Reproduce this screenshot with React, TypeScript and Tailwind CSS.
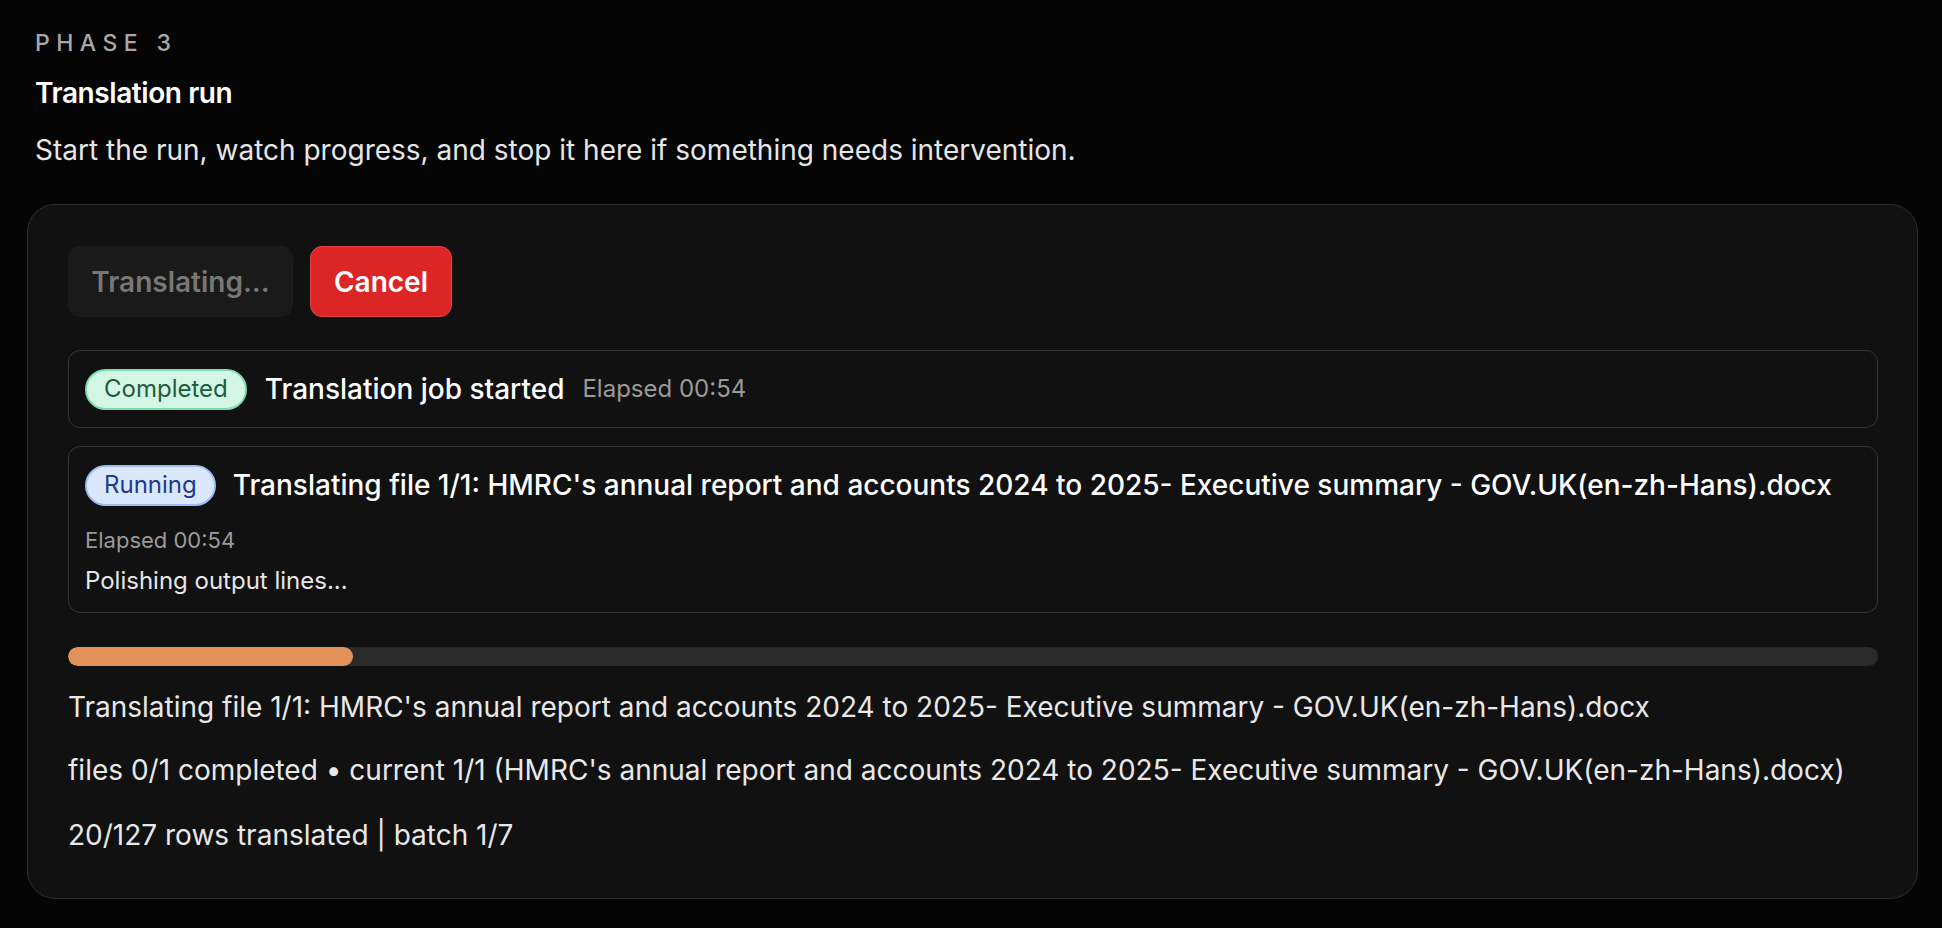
const FILE_NAME =
  "HMRC's annual report and accounts 2024 to 2025- Executive summary - GOV.UK(en-zh-Hans).docx";

const rowsDone = 20;
const rowsTotal = 127;

function Badge({ tone, children }: { tone: "green" | "blue"; children: string }) {
  const styles =
    tone === "green"
      ? "bg-[#d4f7e5] border-[#7fdcae] text-[#1d5c3c]"
      : "bg-[#dbe7fd] border-[#9dbcf2] text-[#1e3a8a]";
  return (
    <span
      className={`inline-flex h-[41px] shrink-0 items-center rounded-full border-2 px-[17px] text-[24px] leading-none ${styles}`}
    >
      {children}
    </span>
  );
}

export default function App() {
  const pct = (rowsDone / rowsTotal) * 100;

  return (
    <div
      className="min-h-screen w-full bg-[#050505] pt-[28px] pb-[30px] text-white"
      style={{ fontFamily: "Inter, 'Noto Sans', sans-serif" }}
    >
      <div className="pl-[35px]">
        <div className="text-[23px] leading-[30px] tracking-[0.28em] text-[#a8a8a8] font-medium">PHASE 3</div>
        <h2 className="mt-[17px] text-[28px] leading-[36px] font-semibold tracking-[-0.015em] text-white">
          Translation run
        </h2>
        <p className="mt-[19px] text-[28px] leading-[40px] text-[#e6e6e6]">
          Start the run, watch progress, and stop it here if something needs intervention.
        </p>
      </div>

      <section className="mt-[34px] ml-[27px] mr-[24px] rounded-[28px] border border-[#2e2e2e] bg-[#111111] pt-[41px] pb-[43px] pl-[40px] pr-[39px]">
        <div className="flex gap-[17px]">
          <button
            disabled
            className="h-[71px] w-[225px] rounded-[12px] bg-[#1a1a1a] text-[28px] font-semibold text-[#777777]"
          >
            Translating...
          </button>
          <button className="h-[71px] w-[142px] rounded-[12px] border border-[#e24545] bg-[#dc2626] text-[28px] font-semibold text-white">
            Cancel
          </button>
        </div>

        <div className="mt-[33px] flex h-[78px] items-center gap-[18px] rounded-[12px] border border-[#363636] bg-[#111111] px-[16px]">
          <Badge tone="green">Completed</Badge>
          <span className="text-[28px] font-medium text-white">Translation job started</span>
          <span className="text-[24px] text-[#9a9a9a]">Elapsed 00:54</span>
        </div>

        <div className="mt-[18px] rounded-[12px] border border-[#363636] bg-[#111111] px-[16px] pt-[17px] pb-[15px]">
          <div className="flex items-center gap-[17px]">
            <Badge tone="blue">Running</Badge>
            <span className="whitespace-nowrap text-[28px] font-medium text-white">
              Translating file 1/1: {FILE_NAME}
            </span>
          </div>
          <div className="mt-[18px] text-[22px] leading-[32px] text-[#9a9a9a]">Elapsed 00:54</div>
          <div className="mt-[9px] text-[24px] leading-[32px] text-[#e6e6e6]">Polishing output lines...</div>
        </div>

        <div className="mt-[34px] h-[19px] w-full overflow-hidden rounded-full bg-[#2a2a2a]">
          <div className="h-full rounded-full bg-[#e39359]" style={{ width: `${pct}%` }} />
        </div>

        <div className="mt-[21px] text-[28px] leading-[40px] text-[#e8e8e8]">
          <p className="whitespace-nowrap">Translating file 1/1: {FILE_NAME}</p>
          <p className="mt-[23px] whitespace-nowrap">
            files 0/1 completed • current 1/1 ({FILE_NAME})
          </p>
          <p className="mt-[25px]">
            {rowsDone}/{rowsTotal} rows translated | batch 1/7
          </p>
        </div>
      </section>
    </div>
  );
}
